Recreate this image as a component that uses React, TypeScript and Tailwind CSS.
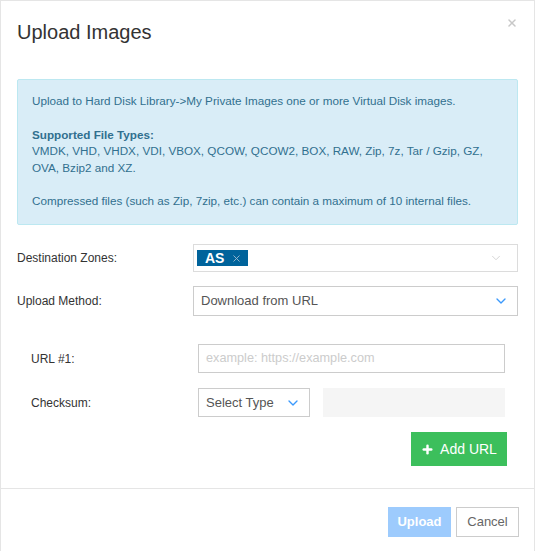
import { ChevronDown, Plus, X } from "lucide-react";

export default function App() {
  return (
    <div
      className="h-[551px] w-[535px] overflow-hidden bg-white text-[#333]"
      style={{ fontFamily: '"Liberation Sans", Arial, sans-serif' }}
    >
      <div className="flex h-full flex-col border-x border-t border-[#e5e5e5]">
        {/* Header */}
        <div className="relative h-[78px] px-[16px] pt-[19px]">
          <h4 className="text-[20px] leading-[24px] text-[#333]">Upload Images</h4>
          <button type="button" className="absolute right-[16px] top-[16px] text-[#c8c8c8]">
            <X className="h-[12px] w-[12px]" strokeWidth={3} />
          </button>
        </div>

        {/* Body */}
        <div className="px-[16px]">
          <div className="h-[146px] rounded-[2px] border border-[#bce8f1] bg-[#d9edf7] px-[14px] pt-[13px] text-[11.7px] leading-[16.5px] text-[#31708f]">
            <p className="mb-[17px]">Upload to Hard Disk Library-&gt;My Private Images one or more Virtual Disk images.</p>
            <p className="mb-[17px]">
              <b>Supported File Types:</b>
              <br />
              VMDK, VHD, VHDX, VDI, VBOX, QCOW, QCOW2, BOX, RAW, Zip, 7z, Tar / Gzip, GZ, OVA, Bzip2 and XZ.
            </p>
            <p>Compressed files (such as Zip, 7zip, etc.) can contain a maximum of 10 internal files.</p>
          </div>

          <div className="mt-[19px] flex items-center">
            <label className="w-[176px] text-[12px]">Destination Zones:</label>
            <div className="flex h-[28px] flex-1 items-center border border-[#dcdcdc] pl-[3px] pr-[14px]">
              <span className="flex h-[16px] items-center gap-[7px] bg-[#00639b] pl-[8px] pr-[6px] text-[14px] font-bold text-white">
                AS
                <X className="h-[11px] w-[11px] text-[#9dbbd0]" strokeWidth={2} />
              </span>
              <span className="flex-1" />
              <ChevronDown className="h-[14px] w-[14px] text-[#cfcfcf]" strokeWidth={1.5} />
            </div>
          </div>

          <div className="mt-[14px] flex items-center">
            <label className="w-[176px] text-[12px]">Upload Method:</label>
            <div className="flex h-[30px] flex-1 items-center border border-[#ccc] pl-[7px] pr-[8px] text-[13px] text-[#555]">
              <span className="flex-1">Download from URL</span>
              <ChevronDown className="h-[16px] w-[16px] text-[#3b99fc]" strokeWidth={2} />
            </div>
          </div>

          {/* URL group */}
          <div className="mt-[28px] pl-[14px] pr-[13px]">
            <div className="flex items-center">
              <label className="w-[167px] text-[12px]">URL #1:</label>
              <div className="flex h-[29px] flex-1 items-center border border-[#ccc] pl-[7px] text-[12.7px] text-[#ccc]">
                example: https://example.com
              </div>
            </div>
            <div className="mt-[15px] flex items-center">
              <label className="w-[167px] text-[12px]">Checksum:</label>
              <div className="flex h-[29px] w-[112px] items-center border border-[#ccc] pl-[7px] pr-[8px] text-[13px] text-[#555]">
                <span className="flex-1">Select Type</span>
                <ChevronDown className="h-[16px] w-[16px] text-[#3b99fc]" strokeWidth={2} />
              </div>
              <div className="ml-[13px] h-[29px] flex-1 bg-[#f5f5f5]" />
            </div>
            <div className="-mr-[2px] mt-[15px] flex justify-end">
              <button
                type="button"
                className="flex h-[34px] w-[96px] items-center justify-center gap-[6px] bg-[#3cbf5c] text-[14px] text-white"
              >
                <Plus className="h-[13px] w-[13px]" strokeWidth={4.5} />
                Add URL
              </button>
            </div>
          </div>
        </div>

        {/* Footer */}
        <div className="mt-[22px] flex justify-end gap-[5px] border-t border-[#e5e5e5] px-[15px] pt-[18px]">
          <button
            type="button"
            className="h-[30px] w-[63px] bg-[#9dcbfd] text-[13px] font-bold text-white"
          >
            Upload
          </button>
          <button
            type="button"
            className="h-[30px] w-[63px] border border-[#ccc] bg-white text-[13px] text-[#666]"
          >
            Cancel
          </button>
        </div>
      </div>
    </div>
  );
}
